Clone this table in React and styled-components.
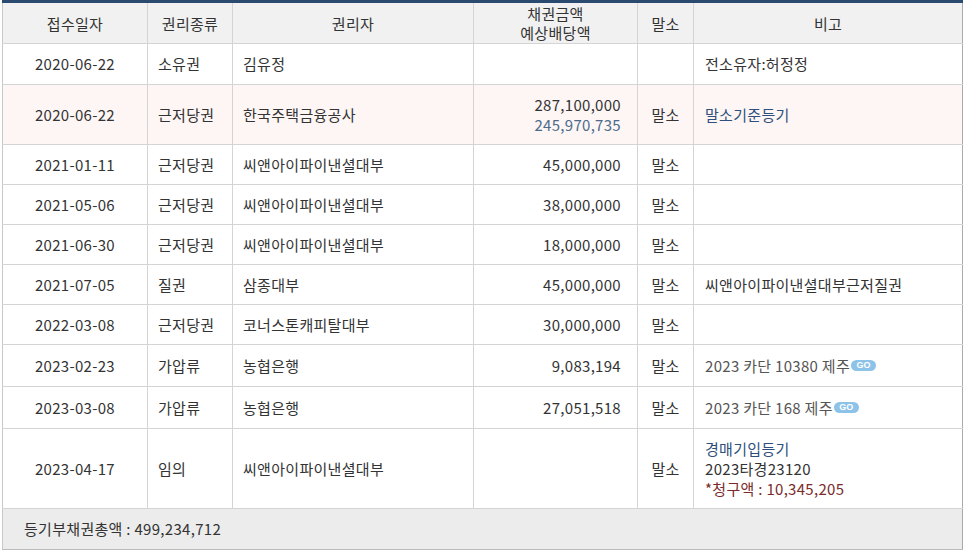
import React from "react";
import styled, { createGlobalStyle } from "styled-components";

const Global = createGlobalStyle`
  html, body { margin: 0; padding: 0; background: #fff; }
  body { font-family: "Noto Sans CJK KR", "Noto Sans", sans-serif; color: #333; }
`;

const Wrap = styled.div`
  padding: 0 4px 0 2px;
  width: 960px;
`;

const Table = styled.table`
  width: 960px;
  border-collapse: collapse;
  table-layout: fixed;
  border-top: 3px solid #2b4a6f;
  font-size: 15px;
  letter-spacing: 0.3px;
  line-height: 20px;
`;

const Th = styled.th`
  background: #f1f1f1;
  font-weight: normal;
  color: #333;
  height: 40px;
  padding: 0;
  text-align: center;
  border: 1px solid #d4d4d4;
  border-top: none;
  line-height: 19px;
  &:first-child { border-left: 1px solid #c8c8c8; }
  &:last-child { border-right: 1px solid #aaa; }
`;

const Tr = styled.tr`
  background: ${(p) => (p.$hl ? "#fdf6f5" : "#fff")};
  height: ${(p) => p.$h}px;
`;

const Td = styled.td`
  border: 1px solid #d4d4d4;
  padding: ${(p) => p.$pad || "0"};
  text-align: ${(p) => p.$align || "left"};
  color: ${(p) => p.$color || "#333"};
  white-space: nowrap;
  &:first-child { border-left: 1px solid #c8c8c8; }
  &:last-child { border-right: 1px solid #aaa; }
`;

const Sub = styled.div`
  color: ${(p) => p.$color};
`;

const Go = styled.span`
  display: inline-block;
  vertical-align: middle;
  margin-left: 1px;
  margin-top: -3px;
  width: 25px;
  height: 11px;
  border-radius: 6px;
  background: #8ec3e9;
  color: #fff;
  font-family: "Liberation Sans", sans-serif;
  font-size: 9px;
  letter-spacing: 0;
  font-weight: bold;
  line-height: 11px;
  text-align: center;
`;

const Foot = styled.td`
  background: #ececec;
  height: 40px;
  padding: 0 0 0 21px;
  border: 1px solid #c8c8c8;
  border-right: 1px solid #aaa;
  border-bottom: 1px solid #bbb;
  color: #333;
`;

const rows = [
  { d: "2020-06-22", t: "소유권", n: "김유정", a: "", m: "", note: "전소유자:허정정", h: 41 },
  { d: "2020-06-22", t: "근저당권", n: "한국주택금융공사", a: "287,100,000", a2: "245,970,735", m: "말소", note: "말소기준등기", noteColor: "#2e4f7c", h: 60, hl: true },
  { d: "2021-01-11", t: "근저당권", n: "씨앤아이파이낸셜대부", a: "45,000,000", m: "말소", note: "", h: 40 },
  { d: "2021-05-06", t: "근저당권", n: "씨앤아이파이낸셜대부", a: "38,000,000", m: "말소", note: "", h: 40 },
  { d: "2021-06-30", t: "근저당권", n: "씨앤아이파이낸셜대부", a: "18,000,000", m: "말소", note: "", h: 40 },
  { d: "2021-07-05", t: "질권", n: "삼종대부", a: "45,000,000", m: "말소", note: "씨앤아이파이낸셜대부근저질권", h: 40 },
  { d: "2022-03-08", t: "근저당권", n: "코너스톤캐피탈대부", a: "30,000,000", m: "말소", note: "", h: 40 },
  { d: "2023-02-23", t: "가압류", n: "농협은행", a: "9,083,194", m: "말소", note: "2023 카단 10380 제주", go: true, h: 42 },
  { d: "2023-03-08", t: "가압류", n: "농협은행", a: "27,051,518", m: "말소", note: "2023 카단 168 제주", go: true, h: 42 },
  { d: "2023-04-17", t: "임의", n: "씨앤아이파이낸셜대부", a: "", m: "말소", multi: true, h: 80 },
];

export default function App() {
  return (
    <>
      <Global />
      <Wrap>
        <Table>
          <colgroup>
            <col style={{ width: 145 }} />
            <col style={{ width: 85 }} />
            <col style={{ width: 241 }} />
            <col style={{ width: 164 }} />
            <col style={{ width: 56 }} />
            <col style={{ width: 269 }} />
          </colgroup>
          <thead>
            <tr>
              <Th>접수일자</Th>
              <Th>권리종류</Th>
              <Th>권리자</Th>
              <Th>채권금액<br />예상배당액</Th>
              <Th>말소</Th>
              <Th>비고</Th>
            </tr>
          </thead>
          <tbody>
            {rows.map((r, i) => (
              <Tr key={i} $h={r.h} $hl={r.hl}>
                <Td $align="center">{r.d}</Td>
                <Td $pad="0 0 0 10px">{r.t}</Td>
                <Td $pad="0 0 0 10px">{r.n}</Td>
                <Td $align="right" $pad="0 16px 0 0">
                  {r.a}
                  {r.a2 && <Sub $color="#4c6b8c">{r.a2}</Sub>}
                </Td>
                <Td $align="center">{r.m}</Td>
                <Td $pad="0 0 0 11px" $color={r.noteColor || (r.go ? "#555" : "#333")}>
                  {r.multi ? (
                    <>
                      <Sub $color="#2e4f7c">경매기입등기</Sub>
                      <Sub $color="#333">2023타경23120</Sub>
                      <Sub $color="#7b2b2b">*청구액 : 10,345,205</Sub>
                    </>
                  ) : (
                    <>
                      {r.note}
                      {r.go && <Go>GO</Go>}
                    </>
                  )}
                </Td>
              </Tr>
            ))}
            <tr>
              <Foot colSpan={6}>등기부채권총액 : 499,234,712</Foot>
            </tr>
          </tbody>
        </Table>
      </Wrap>
    </>
  );
}
